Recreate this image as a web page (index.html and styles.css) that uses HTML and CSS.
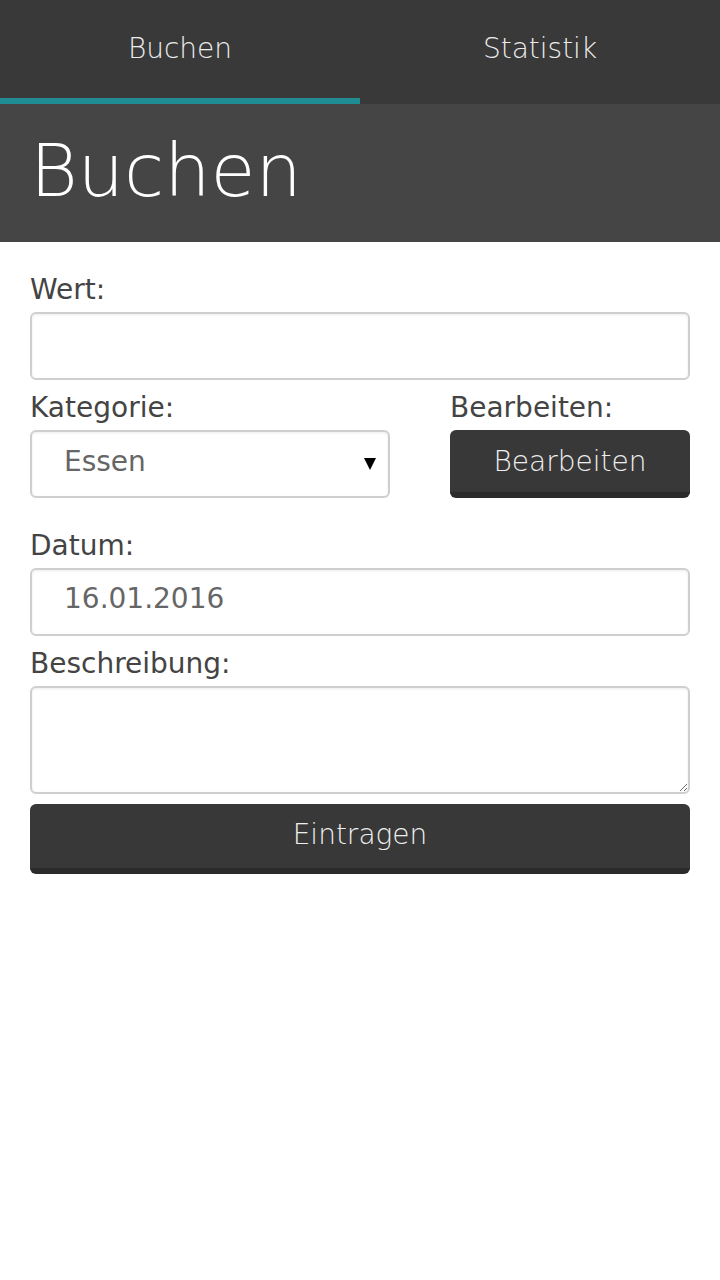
FILE: index.html
```html
<!DOCTYPE html>
<html lang="de">
<head>
<meta charset="utf-8">
<title>Buchen</title>
<link rel="stylesheet" href="styles.css">
</head>
<body>
<nav class="tabs">
  <a class="tab tab-active">Buchen</a>
  <a class="tab">Statistik</a>
</nav>
<header class="page-header">
  <h1 class="page-title">Buchen</h1>
</header>
<form class="form">
  <label class="label label-wert" for="wert">Wert:</label>
  <input class="field" id="wert" type="text">

  <div class="row">
    <div class="col">
      <label class="label" for="kategorie">Kategorie:</label>
      <div class="select-wrap">
        <select class="field field-select" id="kategorie">
          <option>Essen</option>
        </select>
        <svg class="select-arrow" width="12" height="12" viewBox="0 0 12 12"><polygon points="0,0 12,0 6,12" fill="#000"/></svg>
      </div>
    </div>
    <div class="col">
      <label class="label">Bearbeiten:</label>
      <button type="button" class="btn btn-edit">Bearbeiten</button>
    </div>
  </div>

  <label class="label label-datum" for="datum">Datum:</label>
  <input class="field field-date" id="datum" type="text" value="16.01.2016">

  <label class="label label-beschr" for="beschr">Beschreibung:</label>
  <textarea class="field field-area" id="beschr"></textarea>

  <button type="button" class="btn btn-submit">Eintragen</button>
</form>
</body>
</html>
```

FILE: styles.css
```css
* { box-sizing: border-box; }
html, body {
  margin: 0;
  padding: 0;
  background: #fff;
  font-family: "DejaVu Sans", sans-serif;
}

.tabs {
  display: flex;
  background: #393939;
  height: 104px;
}
.tab {
  flex: 1;
  height: 104px;
  line-height: 98px;
  text-align: center;
  color: #ececec;
  font-size: 28px;
  font-weight: 200;
  border-bottom: 6px solid transparent;
}
.tab-active { border-bottom-color: #1f8b93; }

.page-header {
  background: #454545;
  height: 138px;
  padding: 0 30px 4px;
}
.page-title {
  margin: 0;
  font-size: 73px;
  font-weight: 200;
  line-height: 134px;
  color: #fff;
}

.form {
  padding: 32px 30px 0;
  display: flex;
  flex-direction: column;
}
.label {
  display: block;
  font-size: 28px;
  line-height: 32px;
  color: #444;
  margin-bottom: 6px;
}
.label-datum { margin-top: 32px; }
.label-beschr { margin-top: 12px; margin-bottom: 6px; }

.field {
  display: block;
  width: 100%;
  height: 68px;
  border: 2px solid #cfcfcf;
  border-radius: 6px;
  background: #fff;
  box-shadow: inset 0 1px 3px rgba(0,0,0,0.08);
  font-family: "DejaVu Sans", sans-serif;
  font-size: 28px;
  color: #666;
  padding: 0 30px 0 32px;
  margin: 0;
  outline: none;
}
.field-date { padding-bottom: 7px; }
.field-area { height: 108px; resize: vertical; }

.row {
  display: grid;
  grid-template-columns: 360px 1fr;
  column-gap: 60px;
  margin-top: 12px;
}
.col { display: flex; flex-direction: column; }

.select-wrap { position: relative; }
.field-select {
  -webkit-appearance: none;
  appearance: none;
  padding: 0 30px 5px 32px;
}
.select-arrow {
  position: absolute;
  right: 14px;
  top: 28px;
}

.btn {
  display: block;
  width: 100%;
  border: 0;
  border-bottom: 6px solid #2b2b2b;
  border-radius: 6px;
  background: #383838;
  color: #eee;
  font-family: "DejaVu Sans", sans-serif;
  font-size: 28px;
  font-weight: 200;
  margin: 0;
  padding: 0;
}
.btn-edit { height: 68px; }
.btn-submit { height: 70px; margin-top: 10px; padding-bottom: 4px; }
```
